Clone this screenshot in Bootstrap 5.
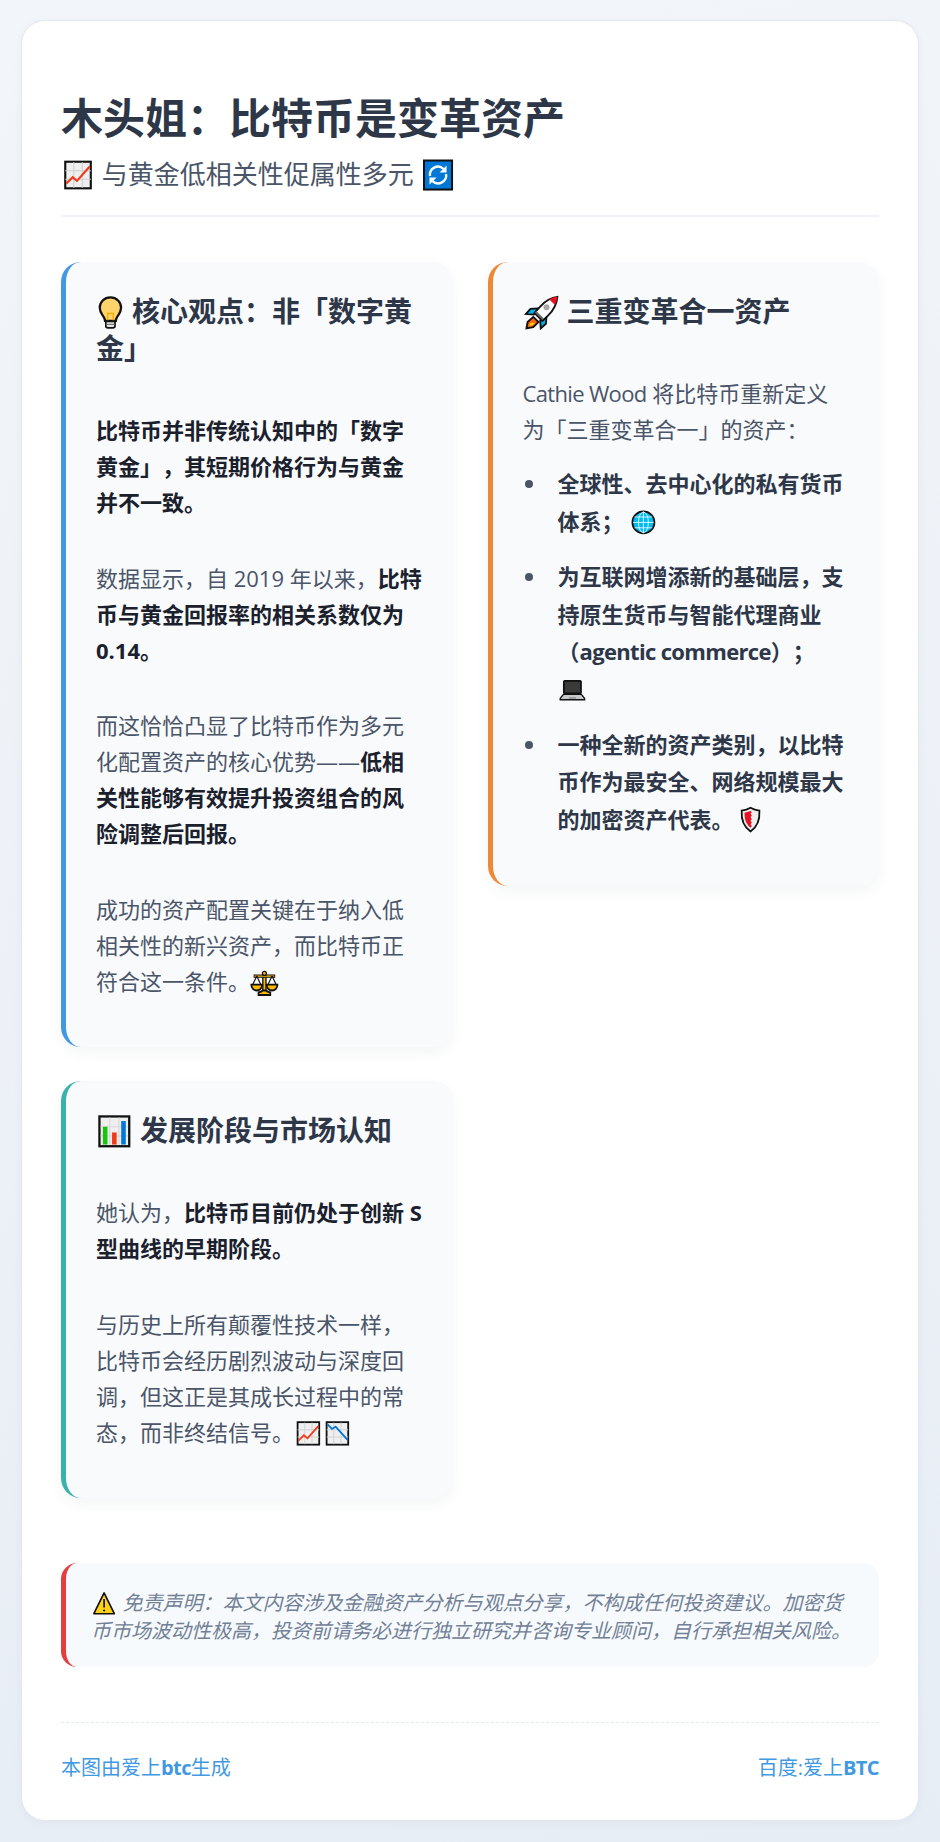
<!DOCTYPE html>
<html lang="zh-CN">
<head>
<meta charset="utf-8">
<title>木头姐：比特币是变革资产</title>
<link href="https://cdn.jsdelivr.net/npm/bootstrap@5.3.0/dist/css/bootstrap.min.css" rel="stylesheet">
<style>
html,body{min-height:100%}
body{margin:0;padding:20px 21px 21px;background:linear-gradient(170deg,#f2f5f9 0%,#e7edf5 100%);font-family:"Open Sans","Noto Sans CJK SC",sans-serif;color:#4a5568;font-size:22px;line-height:36px;font-kerning:none;text-spacing-trim:space-all}
.sheet{background:#fff;border:1px solid #e2e8f0;border-radius:24px;padding:69px 39px 37px;box-shadow:0 2px 10px rgba(45,55,72,.04)}
.head-block{border-bottom:2px solid #f0f4f8;padding-bottom:21px;margin-bottom:45px}
.main-title{font-size:42px;font-weight:700;color:#2d3748;line-height:55px;margin:0 0 10px}
.sub-title{font-size:26px;color:#4a5568;line-height:39px;margin:0}
.two-up{display:grid;grid-template-columns:1fr 1fr;column-gap:35px;row-gap:34px;align-items:start}
.note-box{background:#f9fafc;border-left:5px solid #4299e1;border-radius:20px;padding:31px 30px 48px;box-shadow:0 6px 14px rgba(45,55,72,.05)}
.edge-orange{border-left-color:#ed8936}
.edge-teal{border-left-color:#38b2ac}
.note-head{font-size:28px;font-weight:700;color:#2d3748;line-height:37px;margin:0 0 45px}
.note-box p{margin:0 0 39.5px}
.note-box p:last-child{margin-bottom:0}
.note-box p strong{font-weight:700;color:#1a202c}
.note-box .lead-in{margin-bottom:18px}
.point-list{margin:0;padding:0 0 0 35px;list-style:none}
.point-list li{position:relative;line-height:37.4px;margin-bottom:18px;font-weight:700;color:#4a5568}
.point-list li::before{content:"";position:absolute;left:-33px;top:15px;width:8px;height:8px;border-radius:50%;background:#4a5568}
.point-list li:last-child{margin-bottom:0}
.point-list strong{color:#2d3748;font-weight:700}
.latin-run{letter-spacing:-.03em}
.warn-box{background:#f7fafc;border-left:5px solid #e53e3e;border-radius:16px;margin-top:65px;padding:26px 25px 22px;font-size:20px;line-height:28px;font-style:italic;color:#718096}
.foot-row{border-top:1px dashed #e2e8f0;margin-top:55px;padding-top:30px;font-size:20px;line-height:30px;color:#4299e1}
.foot-row strong{font-weight:700}
.emo{display:inline-block;width:1.31em;height:1.31em;vertical-align:-.3em;font-style:normal}
.emo-bulb{width:1.03em}
.emo-shield{width:1.05em}
</style>
</head>
<body>
<svg class="d-none" xmlns="http://www.w3.org/2000/svg">
<symbol id="e-up" viewBox="0 0 32 32"><rect x="4" y="3.500" width="24" height="25" fill="#efefef" stroke="#111" stroke-width="2"/><path d="M12 4v24M20 4v24M4 12h24M4 20h24" stroke="#d0d0d0" fill="none"/><path d="M5 24l6-6 4 3.500L27 8" stroke="#f03a17" stroke-width="2" fill="none"/></symbol>
<symbol id="e-down" viewBox="0 0 32 32"><rect x="4" y="3.500" width="24" height="25" fill="#efefef" stroke="#111" stroke-width="2"/><path d="M12 4v24M20 4v24M4 12h24M4 20h24" stroke="#d0d0d0" fill="none"/><path d="M5 6l5 5 4-2.500L27 23" stroke="#0078d7" stroke-width="2" fill="none"/></symbol>
<symbol id="e-bars" viewBox="0 0 32 32"><rect x="3" y="3" width="26" height="26" fill="#efefef" stroke="#111" stroke-width="2"/><path d="M12 4v24M20 4v24M4 12h24M4 20h24" stroke="#d8d8d8" fill="none"/><rect x="6" y="12" width="4" height="15.500" fill="#16c60c"/><rect x="14" y="17" width="4" height="10.500" fill="#f03a17"/><rect x="22" y="7" width="4" height="20.500" fill="#0078d7"/></symbol>
<symbol id="e-sync" viewBox="0 0 34 34"><rect x="3" y="2.500" width="28" height="29" fill="#0078d7" stroke="#111" stroke-width="2"/><g fill="none" stroke="#fff" stroke-width="2.400"><path d="M9 18a8 8 0 0 1 13.500-7"/><path d="M25 16a8 8 0 0 1-13.500 7"/></g><path d="M25.500 7.500v7h-7zM8.500 26.500v-7h7z" fill="#fff"/></symbol>
<symbol id="e-bulb" viewBox="0 0 25 32"><path d="M12.500 3C7 3 3.200 7 3.200 12c0 4 2.300 6 3.600 8.300.7 1.300.9 2.200 1 3.200h9.400c.1-1 .3-1.900 1-3.200 1.300-2.300 3.600-4.300 3.600-8.300 0-5-3.800-9-9.300-9z" fill="#ffd56b" stroke="#111" stroke-width="2"/><path d="M10 23v-6h5v6" fill="none" stroke="#f7a800" stroke-width="1.200"/><path d="M8.500 24h8v4.200c0 .8-1 1.300-2 1.300h-4c-1 0-2-.5-2-1.300z" fill="#e6e6e6" stroke="#111" stroke-width="1.500"/><path d="M9 26.500h7" stroke="#777"/></symbol>
<symbol id="e-rocket" viewBox="0 0 32 32"><path d="M13 12.500 6.500 13l-4 4.500 7 .500z" fill="#00b4f0" stroke="#111" stroke-width="1.600"/><path d="M20.500 19.500 20 26l-4.500 4-.500-7z" fill="#00b4f0" stroke="#111" stroke-width="1.600"/><path d="M9 20l-5 4.500L3 30l6-1 4.500-4.500z" fill="#f7630c" stroke="#111" stroke-width="1.600"/><path d="M6.500 25l-1 3 3-.7 2-2z" fill="#fcd116"/><path d="M30 2.500c-6 .5-11 4-15 8.500l-5 5.500 7 7 5-4.800c4-4 7.500-9.600 8-16.200z" fill="#fff" stroke="#111" stroke-width="1.600"/><path d="M30 2.500c-2.600.2-5 1-7 2.200l4.900 4.900c1.100-2 1.900-4.500 2.100-7.100z" fill="#e81123"/><circle cx="20.500" cy="11.500" r="2.600" fill="#a8a8a8"/><path d="M11 15.500l6.500 6.500" stroke="#666" stroke-width="2"/></symbol>
<symbol id="e-scale" viewBox="0 0 32 32"><path d="M16 7v18" stroke="#111" stroke-width="5"/><path d="M16 7v18" stroke="#fcb900" stroke-width="2"/><path d="M4 9h24" stroke="#111" stroke-width="3.400"/><path d="M5 9h22" stroke="#fcb900" stroke-width="1.200"/><path d="M7.500 9 2.800 19M7.500 9l4.700 10M24.500 9l-4.700 10M24.500 9l4.700 10" stroke="#111" stroke-width="1.300" fill="none"/><path d="M1.500 18.500h12a6 6.500 0 0 1-12 0zM18.500 18.500h12a6 6.500 0 0 1-12 0z" fill="#fcb900" stroke="#111" stroke-width="2"/><path d="M9.500 30v-3c2-.3 4-1 4.500-2h4c.5 1 2.500 1.700 4.500 2v3z" fill="#fcb900" stroke="#111" stroke-width="2"/><circle cx="16" cy="6" r="2.200" fill="#fcb900" stroke="#111" stroke-width="1.400"/></symbol>
<symbol id="e-globe" viewBox="0 0 32 32"><circle cx="16" cy="16" r="12.200" fill="#00bcf2" stroke="#111" stroke-width="2"/><g fill="none" stroke="#fff" stroke-width=".900"><ellipse cx="16" cy="16" rx="5.500" ry="11.500"/><path d="M16 4v24M4.500 16h23M6 10h20M6 22h20"/></g></symbol>
<symbol id="e-laptop" viewBox="0 0 32 32"><rect x="6.500" y="6.500" width="19" height="14" rx="1" fill="#3a3a3a" stroke="#111" stroke-width="2"/><path d="M6 21.500h20l3.500 4.500v1.500h-27V26z" fill="#c8c8c8" stroke="#111" stroke-width="1.600"/><path d="M12 25.500h8" stroke="#777" stroke-width="1.200"/></symbol>
<symbol id="e-shield" viewBox="0 0 26 32"><path d="M13 3c3 1.800 6.500 2.800 10 3 .5 9-.8 17.500-10 23.500C3.800 23.500 2.500 15 3 6c3.500-.2 7-1.200 10-3z" fill="#eee" stroke="#111" stroke-width="2"/><path d="M13 6.500l-6.800 2c-.1 6 1 12 6.800 17l1.500-2-1.500-2 1.500-2-1.500-2 1.500-2-1.500-2 1.500-2-1.500-2 1.500-1.800z" fill="#e81123"/></symbol>
<symbol id="e-warn" viewBox="0 0 32 32"><path d="M16 3.500 28.500 29h-25z" fill="#fcd116" stroke="#111" stroke-width="2" stroke-linejoin="round"/><path d="M16 11v10.500" stroke="#111" stroke-width="2"/><circle cx="16" cy="25" r="1.300" fill="#111"/></symbol>
</svg>

<main class="sheet">
  <header class="head-block">
    <h1 class="main-title">木头姐：比特币是变革资产</h1>
    <p class="sub-title"><svg class="emo"><use href="#e-up"/></svg> 与黄金低相关性促属性多元 <svg class="emo"><use href="#e-sync"/></svg></p>
  </header>

  <section class="two-up">
    <article class="note-box">
      <h2 class="note-head"><svg class="emo emo-bulb"><use href="#e-bulb"/></svg> 核心观点：非「数字黄金」</h2>
      <p><strong>比特币并非传统认知中的「数字黄金」，其短期价格行为与黄金并不一致。</strong></p>
      <p>数据显示，自 2019 年以来，<strong>比特币与黄金回报率的相关系数仅为 0.14。</strong></p>
      <p>而这恰恰凸显了比特币作为多元化配置资产的核心优势——<strong>低相关性能够有效提升投资组合的风险调整后回报。</strong></p>
      <p>成功的资产配置关键在于纳入低相关性的新兴资产，而比特币正符合这一条件。<svg class="emo"><use href="#e-scale"/></svg></p>
    </article>

    <article class="note-box edge-orange">
      <h2 class="note-head"><svg class="emo"><use href="#e-rocket"/></svg> 三重变革合一资产</h2>
      <p class="lead-in"><span class="latin-run">Cathie Wood</span> 将比特币重新定义为「三重变革合一」的资产：</p>
      <ul class="point-list">
        <li><strong>全球性、去中心化的私有货币体系；</strong> <svg class="emo"><use href="#e-globe"/></svg></li>
        <li><strong>为互联网增添新的基础层，支持原生货币与智能代理商业（<span class="latin-run">agentic commerce</span>）；</strong><br><svg class="emo"><use href="#e-laptop"/></svg></li>
        <li><strong>一种全新的资产类别，以比特币作为最安全、网络规模最大的加密资产代表。</strong> <svg class="emo emo-shield"><use href="#e-shield"/></svg></li>
      </ul>
    </article>

    <article class="note-box edge-teal">
      <h2 class="note-head"><svg class="emo"><use href="#e-bars"/></svg> 发展阶段与市场认知</h2>
      <p>她认为，<strong>比特币目前仍处于创新 S 型曲线的早期阶段。</strong></p>
      <p>与历史上所有颠覆性技术一样，比特币会经历剧烈波动与深度回调，但这正是其成长过程中的常态，而非终结信号。<svg class="emo"><use href="#e-up"/></svg><svg class="emo"><use href="#e-down"/></svg></p>
    </article>
  </section>

  <aside class="warn-box"><svg class="emo"><use href="#e-warn"/></svg> 免责声明：本文内容涉及金融资产分析与观点分享，不构成任何投资建议。加密货币市场波动性极高，投资前请务必进行独立研究并咨询专业顾问，自行承担相关风险。</aside>

  <footer class="foot-row d-flex justify-content-between">
    <span>本图由爱上<strong class="latin-run">btc</strong>生成</span>
    <span>百度:爱上<strong class="latin-run">BTC</strong></span>
  </footer>
</main>
<script src="https://cdn.jsdelivr.net/npm/bootstrap@5.3.0/dist/js/bootstrap.bundle.min.js"></script>
</body>
</html>
